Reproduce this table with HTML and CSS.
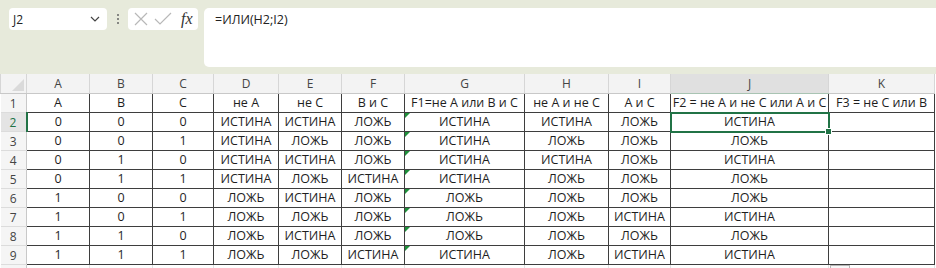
FILE: index.html
```html
<!DOCTYPE html>
<html lang="ru">
<head>
<meta charset="utf-8">
<title>Excel</title>
<link rel="stylesheet" href="styles.css">
</head>
<body>
<div class="fbar">
  <div class="namebox">
    <span class="nb-text">J2</span>
    <svg class="chev" width="10" height="6" viewBox="0 0 10 6"><polyline points="1,1 5,5 9,1" fill="none" stroke="#444" stroke-width="1.2"/></svg>
  </div>
  <div class="dots"><i></i><i></i><i></i></div>
  <div class="btns">
    <svg width="16" height="16" viewBox="0 0 16 16"><path d="M2 2 L14 14 M14 2 L2 14" stroke="#b8b8b8" stroke-width="1.2" fill="none"/></svg>
    <svg width="18" height="16" viewBox="0 0 18 16"><polyline points="1,8 6,13 17,2" stroke="#b8b8b8" stroke-width="1.2" fill="none"/></svg>
    <span class="fx">fx</span>
  </div>
  <div class="finput">=ИЛИ(H2;I2)</div>
</div>
<div class="sheet">
<table class="grid">
  <colgroup>
    <col class="c-rh"><col class="c63"><col class="c63"><col class="c61"><col class="c65"><col class="c63"><col class="c63"><col class="c120"><col class="c84"><col class="c62"><col class="c158"><col class="c106">
  </colgroup>
  <tr class="hdr">
    <th class="corner"><span class="tri"></span></th><th>A</th><th>B</th><th>C</th><th>D</th><th>E</th><th>F</th><th>G</th><th>H</th><th>I</th><th class="selcol">J</th><th>K</th>
  </tr>
  <tr class="row">
    <th class="rh">1</th><td>А</td><td>В</td><td>С</td><td>не А</td><td>не С</td><td>В и С</td><td>F1=не А или В и С</td><td>не А и не С</td><td>А и С</td><td>F2 = не А и не С или А и С</td><td>F3 = не С или В</td>
  </tr>
  <tr class="row">
    <th class="rh selrow">2</th><td>0</td><td>0</td><td>0</td><td>ИСТИНА</td><td>ИСТИНА</td><td>ЛОЖЬ</td><td class="warn">ИСТИНА</td><td>ИСТИНА</td><td>ЛОЖЬ</td><td class="sel">ИСТИНА<span class="handle"></span></td><td></td>
  </tr>
  <tr class="row">
    <th class="rh">3</th><td>0</td><td>0</td><td>1</td><td>ИСТИНА</td><td>ЛОЖЬ</td><td>ЛОЖЬ</td><td class="warn">ИСТИНА</td><td>ЛОЖЬ</td><td>ЛОЖЬ</td><td>ЛОЖЬ</td><td></td>
  </tr>
  <tr class="row">
    <th class="rh">4</th><td>0</td><td>1</td><td>0</td><td>ИСТИНА</td><td>ИСТИНА</td><td>ЛОЖЬ</td><td class="warn">ИСТИНА</td><td>ИСТИНА</td><td>ЛОЖЬ</td><td>ИСТИНА</td><td></td>
  </tr>
  <tr class="row">
    <th class="rh">5</th><td>0</td><td>1</td><td>1</td><td>ИСТИНА</td><td>ЛОЖЬ</td><td>ИСТИНА</td><td class="warn">ИСТИНА</td><td>ЛОЖЬ</td><td>ЛОЖЬ</td><td>ЛОЖЬ</td><td></td>
  </tr>
  <tr class="row">
    <th class="rh">6</th><td>1</td><td>0</td><td>0</td><td>ЛОЖЬ</td><td>ИСТИНА</td><td>ЛОЖЬ</td><td class="warn">ЛОЖЬ</td><td>ЛОЖЬ</td><td>ЛОЖЬ</td><td>ЛОЖЬ</td><td></td>
  </tr>
  <tr class="row">
    <th class="rh">7</th><td>1</td><td>0</td><td>1</td><td>ЛОЖЬ</td><td>ЛОЖЬ</td><td>ЛОЖЬ</td><td class="warn">ЛОЖЬ</td><td>ЛОЖЬ</td><td>ИСТИНА</td><td>ИСТИНА</td><td></td>
  </tr>
  <tr class="row">
    <th class="rh">8</th><td>1</td><td>1</td><td>0</td><td>ЛОЖЬ</td><td>ИСТИНА</td><td>ЛОЖЬ</td><td class="warn">ЛОЖЬ</td><td>ЛОЖЬ</td><td>ЛОЖЬ</td><td>ЛОЖЬ</td><td></td>
  </tr>
  <tr class="row">
    <th class="rh">9</th><td>1</td><td>1</td><td>1</td><td>ЛОЖЬ</td><td>ЛОЖЬ</td><td>ИСТИНА</td><td class="warn">ИСТИНА</td><td>ЛОЖЬ</td><td>ИСТИНА</td><td>ИСТИНА</td><td></td>
  </tr>
  <tr class="row empty">
    <th class="rh"></th><td></td><td></td><td></td><td></td><td></td><td></td><td></td><td></td><td></td><td></td><td class="qa"><span class="qabox"></span></td>
  </tr>
</table>
</div>
</body>
</html>
```

FILE: styles.css
```css
html, body {
  margin: 0;
  padding: 0;
}
body {
  width: 936px;
  height: 268px;
  overflow: hidden;
  background: #e7eadb;
  font-family: "Open Sans", "Liberation Sans", sans-serif;
}
.fbar {
  display: flex;
  align-items: flex-start;
  padding: 8px 0 0 9px;
  box-sizing: border-box;
  height: 74px;
}
.namebox {
  width: 98px;
  height: 22px;
  background: #fff;
  border-radius: 4px;
  box-sizing: border-box;
  display: flex;
  align-items: center;
  justify-content: space-between;
  padding: 0 7px 0 4px;
}
.nb-text {
  font-size: 12px;
  color: #222;
}
.dots {
  width: 21px;
  height: 22px;
  display: flex;
  flex-direction: column;
  align-items: center;
  justify-content: center;
  gap: 2px;
}
.dots i {
  width: 2px;
  height: 2px;
  background: #666;
  border-radius: 1px;
}
.btns {
  width: 70px;
  height: 22px;
  background: #fff;
  border-radius: 4px;
  display: flex;
  align-items: center;
  gap: 5px;
  padding-left: 5px;
  box-sizing: border-box;
}
.fx {
  font-family: "Liberation Serif", serif;
  font-style: italic;
  font-size: 16px;
  color: #333;
  margin-left: 4px;
  line-height: 1;
}
.finput {
  flex: 1;
  margin-left: 6px;
  height: 59px;
  background: #fff;
  border-radius: 5px 0 0 5px;
  font-size: 12.5px;
  color: #222;
  padding: 3px 0 0 11px;
  box-sizing: border-box;
}
.sheet {
  background: #fff;
  height: 194px;
  overflow: hidden;
}
.grid {
  border-collapse: collapse;
  table-layout: fixed;
  width: 934px;
  font-size: 12.5px;
  color: #1e1e1e;
}
.c-rh { width: 26px; }
.c61 { width: 61px; }
.c62 { width: 62px; }
.c63 { width: 63px; }
.c65 { width: 65px; }
.c84 { width: 84px; }
.c106 { width: 106px; }
.c120 { width: 120px; }
.c158 { width: 158px; }
.grid th {
  font-weight: normal;
  color: #444;
  padding: 0;
}
.hdr th {
  height: 19px;
  background: #f3f3f3;
  border-left: 1px solid #d6d6d6;
  border-right: 1px solid #d6d6d6;
  border-bottom: 1px solid #c8c8c8;
  font-size: 12px;
}
.hdr th.selcol {
  background: #e0e0e0;
  border-bottom: 1px solid #a9c4b3;
}
.corner {
  position: relative;
}
.tri {
  position: absolute;
  right: 2px;
  bottom: 2px;
  width: 0;
  height: 0;
  border-left: 12px solid transparent;
  border-bottom: 12px solid #dadada;
}
.rh {
  background: #f5f5f5;
  border-bottom: 1px solid #dcdcdc;
  border-right: 1px solid #c8c8c8;
  font-size: 12px;
}
.rh.selrow {
  background: #e4e4e4;
  color: #217346;
  border-right: 2px solid #217346;
}
.row { height: 19px; }
.grid td {
  border: 1px solid #3e3e3e;
  text-align: center;
  padding: 0;
  white-space: nowrap;
  overflow: hidden;
  line-height: 16px;
}
.empty td {
  border: none;
  border-right: 1px solid #e2e2e2;
}
.empty .rh {
  border-bottom: none;
}
.warn {
  position: relative;
}
.warn::before {
  content: "";
  position: absolute;
  left: 0;
  top: 0;
  border-top: 5px solid #1e8f3a;
  border-right: 5px solid transparent;
}
.grid td.sel {
  position: relative;
  overflow: visible;
  outline: 2px solid #217346;
  outline-offset: -1px;
}
.handle {
  position: absolute;
  right: -4px;
  bottom: -4px;
  width: 5px;
  height: 5px;
  background: #217346;
  border: 1px solid #fff;
}
.qa {
  position: relative;
  overflow: visible;
}
.qabox {
  position: absolute;
  left: 1px;
  top: 0;
  width: 18px;
  height: 10px;
  border: 1px solid #b5b5b5;
  background: #f7f7f7;
}
```
